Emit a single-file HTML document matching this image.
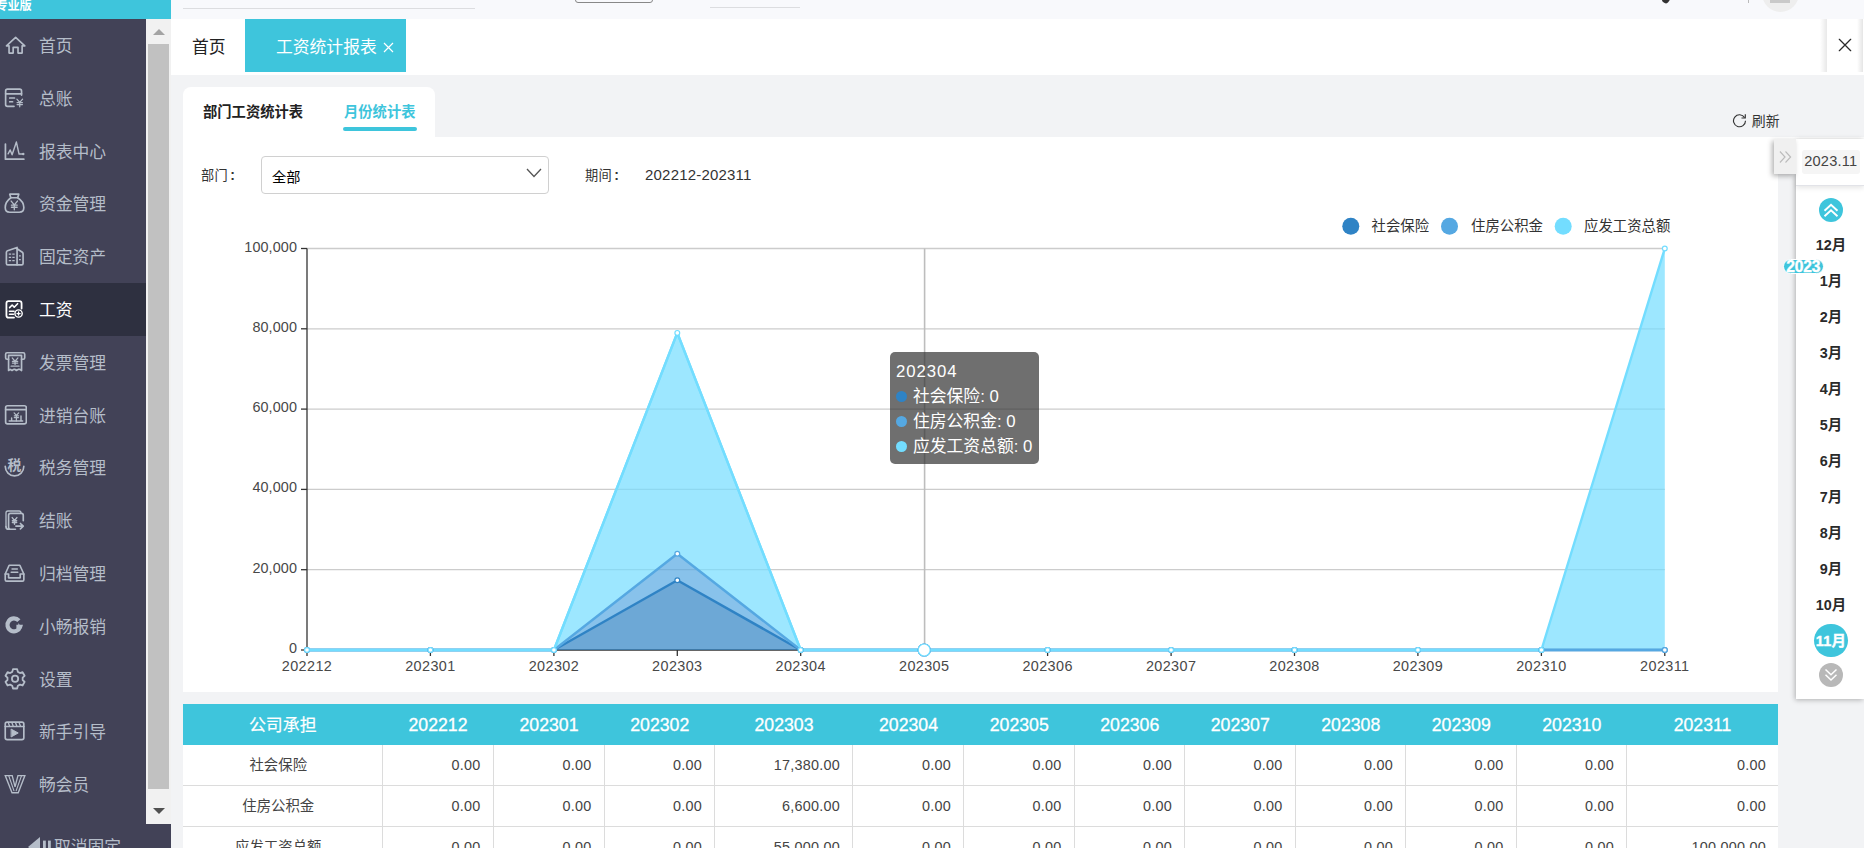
<!DOCTYPE html><html lang="zh-CN"><head><meta charset="utf-8"><title>工资统计报表</title><style>
*{box-sizing:border-box;margin:0;padding:0}
html,body{width:1864px;height:848px;overflow:hidden;background:#f2f3f5;font-family:"Liberation Sans","Noto Sans CJK SC",sans-serif;color:#333}
body{position:relative}
#topbar{position:absolute;left:0;top:0;width:1864px;height:19px;background:#f8f9fc;overflow:hidden}
#brand{position:absolute;left:0;top:0;width:171px;height:19px;background:#3ec5dc;overflow:hidden}
#brand span{position:absolute;left:-4.5px;top:-.5px;font-size:12.2px;line-height:12px;font-weight:bold;color:#fff;letter-spacing:-.2px;white-space:nowrap}
.tl{position:absolute;height:1px;background:#dcdde0}
.tbtn{position:absolute;left:575px;top:-10px;width:77.5px;height:13px;border:1px solid #888;border-radius:3px;background:transparent}
.pen{position:absolute;left:1662px;top:-3px;width:7px;height:6px;background:#333;border-radius:0 0 3px 3px;transform:rotate(35deg)}
.vsep{position:absolute;left:1748px;top:0;width:1px;height:3px;background:#bbb}
.avatar{position:absolute;left:1762px;top:-25px;width:37px;height:37px;border-radius:50%;background:#eee;overflow:hidden}
.avatar i{position:absolute;left:8px;top:20px;width:20px;height:8px;background:#c9c9c9}
#side{position:absolute;left:0;top:19px;width:146px;height:829px;background:#424257}
#side .it{position:absolute;left:0;width:146px;height:52.8px;color:#b5bdc9;font-size:16.8px;margin-top:-19px}
#side .it.act{background:#2e3040;color:#fff}
#side .it .ic{position:absolute;left:4px;top:14.5px}
#side .it span{position:absolute;left:39px;top:15px;line-height:25px;white-space:nowrap}
#sscroll{position:absolute;left:146px;top:19px;width:25px;height:805px;background:#f1f1f1}
#sscroll .thumb{position:absolute;left:2px;top:25px;width:21px;height:745px;background:#c1c1c1}
#sscroll .up{position:absolute;left:6.5px;top:10px;width:0;height:0;border:6px solid transparent;border-top:0;border-bottom:6px solid #a3a3a3}
#sscroll .dn{position:absolute;left:6.5px;top:789px;width:0;height:0;border:6px solid transparent;border-bottom:0;border-top:6px solid #505050}
#sfoot{position:absolute;left:0;top:824px;width:171px;height:24px;background:#424257;color:#b5bdc9;font-size:16.8px;overflow:hidden}
#sfoot span{position:absolute;left:54px;top:10.5px;line-height:25px;white-space:nowrap}
#tabbar{position:absolute;left:171px;top:19px;width:1693px;height:56px;background:#fff}
#tabbar .t1{position:absolute;left:21px;top:16px;font-size:16.8px;line-height:26px;color:#222}
#tabbar .t2{position:absolute;left:74px;top:0;width:161px;height:53px;background:#3ec5dc;color:#fff;font-size:16.8px}
#tabbar .t2 span{position:absolute;left:31px;top:16px;line-height:26px;white-space:nowrap}
#tabbar .closeb{position:absolute;left:1656px;top:0;width:36px;height:53px;background:#fff}
#tabbar .closeb:before{content:'';position:absolute;left:-7px;top:0;width:7px;height:53px;background:linear-gradient(to right,rgba(0,0,0,0),rgba(0,0,0,.09))}
#tabbar .closeb:after{content:'';position:absolute;left:29.5px;top:0;width:6.3px;height:53px;background:linear-gradient(to right,rgba(0,0,0,0),rgba(0,0,0,.10))}
#tabbar .closeb svg{position:absolute;left:11px;top:19px}
#subtabs{position:absolute;left:183px;top:87px;width:252px;height:50px;background:#fff;border-radius:8px 8px 0 0;font-size:14.3px;font-weight:bold}
#subtabs span{position:absolute;top:14px;line-height:22px;white-space:nowrap}
#subtabs .s1{left:20px;color:#222}
#subtabs .s2{left:161px;color:#3ec5dc}
#subtabs i{position:absolute;left:160px;top:40px;width:74px;height:4px;border-radius:2px;background:#3ec5dc}
#refresh{position:absolute;left:1732px;top:112px;font-size:13.9px;color:#333;white-space:nowrap}
#refresh svg{position:absolute;left:0;top:.7px}
#refresh span{position:absolute;left:19.8px;top:.2px;line-height:18px}
#panel{position:absolute;left:183px;top:137px;width:1595px;height:554.5px;background:#fff}
#panel .lab{position:absolute;letter-spacing:.4px;font-size:13.2px;line-height:20px;color:#333;white-space:nowrap}
#panel .sel{position:absolute;left:78px;top:19px;width:288px;height:38px;border:1px solid #d0d0d0;border-radius:4px;background:#fff}
#panel .lab b{font-weight:bold;margin-left:2px;font-size:14px}
#panel .sel span{position:absolute;left:10px;top:9.6px;font-size:14.2px;line-height:20px;color:#000}
#chart text.ay{font-size:14.4px;letter-spacing:.1px;fill:#484848;font-family:"Liberation Sans","Noto Sans CJK SC",sans-serif}
#chart text.ax{font-size:14.4px;letter-spacing:.4px;fill:#484848;font-family:"Liberation Sans","Noto Sans CJK SC",sans-serif}
#chart text.lg{font-size:14.4px;fill:#333;font-family:"Liberation Sans","Noto Sans CJK SC",sans-serif}
#tip{position:absolute;left:707px;top:215px;width:149px;height:112px;background:rgba(50,50,50,.7);border-radius:5px;color:#fff;font-size:16.8px;padding:6.5px 6px;white-space:nowrap}
#tip div{height:25.1px;line-height:25.1px}
#tip div:first-child{letter-spacing:.9px}
#tip i{display:inline-block;width:11px;height:11px;border-radius:50%;margin-right:6px;vertical-align:-0.5px}
#tbl{position:absolute;left:183px;top:704px;width:1595px;height:144px;background:#fff;overflow:hidden}
#tbl .thead{position:absolute;left:0;top:0;width:1595px;height:41px;background:#3ec5dc}
#tbl .th{position:absolute;top:0;height:41px;line-height:43.5px;color:#fff;font-size:17.7px;-webkit-text-stroke:.3px #fff;text-align:center;white-space:nowrap}
#tbl .th.c{-webkit-text-stroke:.2px #fff;font-size:16.9px;font-weight:400;line-height:43px}
#tbl .tr{position:absolute;left:0;width:1595px;height:41.3px;border-bottom:1.2px solid #dcdcdc}
#tbl .td{position:absolute;top:0;height:40.8px;line-height:40px;border-left:1.2px solid #dcdcdc;font-size:14.4px;color:#444;text-align:right;padding-right:12.2px;white-space:nowrap;letter-spacing:.25px}
#tbl .td:last-child{padding-right:11.2px}
#tbl .td.n{text-align:center;padding-right:9px;border-left:0;letter-spacing:0}
#rpstrip{position:absolute;left:1778px;top:137px;width:86px;height:2px;background:#fff}
#rp{position:absolute;left:1796px;top:139px;width:68px;height:559.5px;background:#fff;box-shadow:-1px 1px 5px rgba(0,0,0,.28)}
#rp .hd{position:absolute;left:0;top:0;width:68px;height:46.5px;background:#fff;border-bottom:1px solid #e2e3e8;box-shadow:0 2px 5px rgba(0,0,0,.10)}
#rp .tog{position:absolute;left:-22px;top:0;width:22px;height:35px;background:#f0f0f0;box-shadow:-2px 2px 5px rgba(0,0,0,.3)}
#rp .tog svg{position:absolute;left:5px;top:11px}
#rp .ym{position:absolute;left:6px;top:11px;width:58px;height:24px;background:#f5f5f5;border-radius:3px;font-size:14.6px;line-height:23px;letter-spacing:.2px;text-indent:-.5px;text-align:center;color:#444}
#rp .cup{position:absolute;left:23px;top:59px;width:24px;height:24px;border-radius:50%;background:#3ec5dc}
#rp .cdn{position:absolute;left:23px;top:524px;width:24px;height:24px;border-radius:50%;background:#b8b8b8}
#rp .m{position:absolute;left:0;width:70px;text-align:center;font-size:14.4px;font-weight:bold;line-height:22px;color:#2a2a2a}
#rp .mcur{position:absolute;left:18px;width:33.5px;height:33.5px;border-radius:50%;background:#3ec5dc}
#rp .yr{position:absolute;left:-13.5px;top:119.5px;width:41.5px;height:15px;border-radius:8px;background:#3ec5dc;border:1px solid #fff;color:#fff;font-size:15.6px;font-weight:bold;line-height:13.5px;text-align:center;letter-spacing:-0.2px;-webkit-text-stroke:.4px #fff;overflow:visible}

</style></head><body>
<div id="topbar"><div id="brand"><span>专业版</span></div>
<div class="tl" style="left:183px;top:8px;width:292px"></div>
<div class="tbtn"></div>
<div class="tl" style="left:710px;top:7px;width:90px"></div>
<div class="pen"></div><div class="vsep"></div><div class="avatar"><i></i></div>
</div>
<div id="side">
<div class="it" style="top:19.00px"><svg class="ic" viewBox="0 0 24 24" width="22.9" height="22.9" fill="none" stroke="#b5bdc9" stroke-width="1.75" stroke-linecap="round" stroke-linejoin="round"><path d="M12.2 3.6L21.8 12.4H19V20H14.7V14H9.6V20H5.3V12.4H2.6Z"/></svg><span>首页</span></div>
<div class="it" style="top:71.80px"><svg class="ic" viewBox="0 0 24 24" width="22.9" height="22.9" fill="none" stroke="#b5bdc9" stroke-width="1.75" stroke-linecap="round" stroke-linejoin="round"><path d="M18.4 9.5V5.200Q18.400 3.200 16.400 3.200H3.700Q1.700 3.200 1.700 5.200V19.400Q1.700 21.400 3.700 21.400H10.5"/><path d="M1.700 8.200H18.400M6 12.600H11M6 16.500H9"/><path d="M13.500 13.800l3 3.400l3-3.400M16.500 17.200v4.600M13.700 17.400h5.600M13.700 19.500h5.600" stroke-width="1.300"/></svg><span>总账</span></div>
<div class="it" style="top:124.60px"><svg class="ic" viewBox="0 0 24 24" width="22.9" height="22.9" fill="none" stroke="#b5bdc9" stroke-width="1.75" stroke-linecap="round" stroke-linejoin="round"><path d="M1.500 5.300V21.200H20.800" stroke-width="1.800"/><path d="M4.300 15.500L6.500 11.500L8.500 16.500L13 3.200L15.800 15.800H19.500" stroke-width="1.500"/><circle cx="20.200" cy="15.800" r="1.300" fill="#b5bdc9" stroke="none"/></svg><span>报表中心</span></div>
<div class="it" style="top:177.40px"><svg class="ic" viewBox="0 0 24 24" width="22.9" height="22.9" fill="none" stroke="#b5bdc9" stroke-width="1.75" stroke-linecap="round" stroke-linejoin="round"><path d="M6 2.300H15.500L14.300 6H7.200Z"/><path d="M7.200 6C3 9 1.300 12.500 1.300 16.300C1.300 19.500 3 21.200 6 21.200H16C19 21.200 20.800 19.500 20.800 16.300C20.800 12.500 19 9 14.300 6"/><path d="M7.500 9.500L10.800 13.500L14.100 9.500M10.800 13.500V18.600M7.800 13.800H13.800M7.800 16H13.800" stroke-width="1.400"/></svg><span>资金管理</span></div>
<div class="it" style="top:230.20px"><svg class="ic" viewBox="0 0 24 24" width="22.9" height="22.9" fill="none" stroke="#b5bdc9" stroke-width="1.75" stroke-linecap="round" stroke-linejoin="round"><path d="M13.700 2.600V20.800H4Q2.500 20.800 2.500 19.300V7.800Q2.500 6.600 3.700 6.100Z"/><path d="M13.700 4L19.200 7.600Q20 8.200 20 9.200V19.300Q20 20.800 18.500 20.800H13.700"/><path d="M5 9.500H7.500M8.700 9.500H11.200M5 13H7.500M8.700 13H11.200M5 16.500H7.500M8.700 16.500H11.200M15.700 11.300H17.600M15.700 15.300H17.600" stroke-width="1.300" stroke-linecap="butt"/></svg><span>固定资产</span></div>
<div class="it act" style="top:283.00px"><svg class="ic" viewBox="0 0 24 24" width="22.9" height="22.9" fill="none" stroke="#ffffff" stroke-width="1.75" stroke-linecap="round" stroke-linejoin="round"><g transform="translate(11 12) scale(.93) translate(-11 -12)"><path d="M19 11V5.200Q19 2.700 16.500 2.700H4.400Q1.900 2.700 1.900 5.200V18.700Q1.900 21.200 4.400 21.200H10.500" stroke-width="2"/><path d="M5.500 10L8.400 7L10.700 9.500L14.500 5.500" stroke-width="1.800"/><path d="M5.400 14H10.500M5.400 17.500H9.800" stroke-width="1.800"/><circle cx="15.600" cy="16.600" r="4.100" stroke-width="1.600"/><path d="M15.600 14.800V18.400M13.800 16.600H17.400" stroke-width="1.400"/></g></svg><span>工资</span></div>
<div class="it" style="top:335.80px"><svg class="ic" viewBox="0 0 24 24" width="22.9" height="22.9" fill="none" stroke="#b5bdc9" stroke-width="1.75" stroke-linecap="round" stroke-linejoin="round"><path d="M4.800 9.700H3.200Q1.700 9.700 1.700 8.200V4.400Q1.700 2.900 3.200 2.900H20.200Q21.700 2.900 21.700 4.400V8.200Q21.700 9.700 20.200 9.700H18.400"/><path d="M4.800 5.700V21.500L6.500 20.300L8.400 21.500L10.200 20.300H11.600L13 21.500L14.900 20.300H16.700L18.400 21.500V5.700H4.800"/><path d="M8.600 8.300L11.600 11.800L14.600 8.300M11.600 11.800V15.200M8.800 11.900H14.400M8.800 13.700H14.400M7.400 17H15.800" stroke-width="1.300"/></svg><span>发票管理</span></div>
<div class="it" style="top:388.60px"><svg class="ic" viewBox="0 0 24 24" width="22.9" height="22.9" fill="none" stroke="#b5bdc9" stroke-width="1.75" stroke-linecap="round" stroke-linejoin="round"><rect x="1.700" y="2.900" width="21.700" height="18.900" rx="2"/><path d="M1.700 7H23.400"/><path d="M5.400 18.800H19.600M8 18.800V15.600M17.800 18.800V13.500" stroke-width="1.500"/><path d="M10.600 10.400L13 13L15.400 10.400M13 13V18.800M10.800 13.400H15.200M10.800 15.300H15.200" stroke-width="1.300"/></svg><span>进销台账</span></div>
<div class="it" style="top:441.40px"><svg class="ic" viewBox="0 0 24 24" width="22.9" height="22.9" fill="none" stroke="#b5bdc9" stroke-width="1.75" stroke-linecap="round" stroke-linejoin="round"><path d="M1.300 10.800A9.750 10 0 0 0 20.800 10.800"/><text x="11" y="14.300" text-anchor="middle" font-size="14.500" font-weight="bold" fill="#b5bdc9" stroke="none" font-family="Liberation Sans,Noto Sans CJK SC,sans-serif">税</text></svg><span>税务管理</span></div>
<div class="it" style="top:494.20px"><svg class="ic" viewBox="0 0 24 24" width="22.9" height="22.9" fill="none" stroke="#b5bdc9" stroke-width="1.75" stroke-linecap="round" stroke-linejoin="round"><path d="M2.100 18.500V4.100Q2.100 2.100 4.100 2.100H15.800Q17.800 2.100 17.800 4.100" stroke-width="1.400"/><path d="M20.200 12.300V6.600Q20.200 4.600 18.200 4.600H6.800Q4.800 4.600 4.800 6.600V19.200Q4.800 21.200 6.800 21.200H12M2.100 18.500Q2.100 21.200 4.800 21.200H6.800"/><path d="M8.600 9L11 12L13.500 9M11 12V16M8.800 12.400H13.300M8.800 14.100H13.300" stroke-width="1.500"/><path d="M12.500 18H20M17.200 15.200L20.200 18L17.200 20.800"/></svg><span>结账</span></div>
<div class="it" style="top:547.00px"><svg class="ic" viewBox="0 0 24 24" width="22.9" height="22.9" fill="none" stroke="#b5bdc9" stroke-width="1.75" stroke-linecap="round" stroke-linejoin="round"><path d="M1.300 12.600L5.400 3.400H16.600L20.800 12.600V18.500Q20.800 20 19.300 20H2.800Q1.300 20 1.300 18.500Z"/><path d="M1.300 12.600H4.800V16.600H17V12.600H20.800"/><path d="M8.400 7.300H14M7.500 10.800H14.500" stroke-width="1.500"/></svg><span>归档管理</span></div>
<div class="it" style="top:599.80px"><svg class="ic" viewBox="0 0 24 24" width="22.9" height="22.9" fill="none" stroke="#b5bdc9" stroke-width="1.75" stroke-linecap="round" stroke-linejoin="round"><path d="M15.600 7A6.800 6.800 0 1 0 16.900 13.500H13" stroke-width="4.400" stroke-linecap="butt" stroke-linejoin="miter"/><path d="M15 9.500L19 15H15Z" fill="#b5bdc9" stroke="none"/></svg><span>小畅报销</span></div>
<div class="it" style="top:652.60px"><svg class="ic" viewBox="0 0 24 24" width="22.9" height="22.9" fill="none" stroke="#b5bdc9" stroke-width="1.75" stroke-linecap="round" stroke-linejoin="round"><g transform="translate(11.600 12.300) scale(1.090) translate(-12 -12)"><circle cx="12" cy="12" r="3"/><path d="M10 2.800h4l.7 2.600l2 1.100l2.500-.8l2 3.500l-1.900 1.800v2.200l1.900 1.800l-2 3.500l-2.500-.8l-2 1.100l-.7 2.600h-4l-.7-2.600l-2-1.100l-2.500.8l-2-3.500l1.900-1.800v-2.200L2.800 9.200l2-3.500l2.500.8l2-1.100z"/></g></svg><span>设置</span></div>
<div class="it" style="top:705.40px"><svg class="ic" viewBox="0 0 24 24" width="22.9" height="22.9" fill="none" stroke="#b5bdc9" stroke-width="1.75" stroke-linecap="round" stroke-linejoin="round"><rect x="1.300" y="2.300" width="19.500" height="18.300" rx="2"/><path d="M1.300 6.800H20.800"/><path d="M4.500 2.800l1.400 3.700M8.300 2.800l1.400 3.700M12.100 2.800l1.400 3.700M15.900 2.800l1.400 3.700" stroke-width="1.400"/><path d="M7.800 9.700L14.900 13.600L7.800 17.600Z" fill="#b5bdc9" stroke-width="1"/></svg><span>新手引导</span></div>
<div class="it" style="top:758.20px"><svg class="ic" viewBox="0 0 24 24" width="22.9" height="22.9" fill="none" stroke="#b5bdc9" stroke-width="1.75" stroke-linecap="round" stroke-linejoin="round"><path d="M1.300 2.700H8.600L11.600 14.500L14.600 2.700H21.900L14.900 20.700H8.400Z" stroke-width="1.400" stroke-linejoin="miter"/><path d="M5 3L10.400 18.500M18.300 3L12.800 18.500" stroke-width="1.200"/></svg><span>畅会员</span></div>
</div>
<div id="sscroll"><div class="up"></div><div class="thumb"></div><div class="dn"></div></div>
<div id="sfoot"><svg width="26" height="20" viewBox="0 0 26 20" style="position:absolute;left:28px;top:13px"><path d="M12 0 L12 20 L0 10 Z" fill="#b5bdc9"/><rect x="15" y="3.6" width="2.800" height="14" fill="#b5bdc9"/><rect x="20" y="3.600" width="2.800" height="14" fill="#b5bdc9"/></svg><span>取消固定</span></div>
<div id="tabbar"><div class="t1">首页</div><div class="t2"><span>工资统计报表</span><svg width="11" height="11" viewBox="0 0 11 11" style="position:absolute;left:138px;top:23.3px"><path d="M1 1L10 10M10 1L1 10" stroke="#fff" stroke-width="1.2"/></svg></div>
<div class="closeb"><svg width="14" height="14" viewBox="0 0 14 14"><path d="M1.300 1.300L12.700 12.700M12.700 1.300L1.300 12.700" stroke="#2a2a2a" stroke-width="1.250" stroke-linecap="round"/></svg></div></div>
<div id="subtabs"><span class="s1">部门工资统计表</span><span class="s2">月份统计表</span><i></i></div>
<div id="refresh"><svg width="15" height="15" viewBox="0 0 15 15" fill="none" stroke="#333" stroke-width="1.15"><path d="M12.6 4.6A6 6 0 1 0 13.5 7.7"/><path d="M13.3 1.2V5H9.5" stroke-linejoin="miter"/></svg><span>刷新</span></div>
<div id="panel">
<span class="lab" style="left:18px;top:27.8px">部门<b>:</b></span>
<div class="sel"><span>全部</span><svg width="16" height="10" viewBox="0 0 16 10" style="position:absolute;left:263.5px;top:11px"><path d="M1 1L8 8.5L15 1" fill="none" stroke="#555" stroke-width="1.3"/></svg></div>
<span class="lab" style="left:402px;top:27.8px">期间<b>:</b></span>
<span class="lab" style="left:462px;top:27.6px;font-size:15px;color:#333;letter-spacing:.2px">202212-202311</span>
<svg id="chart" width="1595" height="553" viewBox="183 137 1595 553" style="position:absolute;left:0;top:0"><line x1="301.0" x2="307.0" y1="650.00" y2="650.00" stroke="#333" stroke-width="1.3"/><text x="297.0" y="653.00" text-anchor="end" class="ay">0</text><line x1="307.0" x2="1664.8" y1="569.70" y2="569.70" stroke="#cccccc" stroke-width="1.3"/><line x1="301.0" x2="307.0" y1="569.70" y2="569.70" stroke="#333" stroke-width="1.3"/><text x="297.0" y="572.70" text-anchor="end" class="ay">20,000</text><line x1="307.0" x2="1664.8" y1="489.40" y2="489.40" stroke="#cccccc" stroke-width="1.3"/><line x1="301.0" x2="307.0" y1="489.40" y2="489.40" stroke="#333" stroke-width="1.3"/><text x="297.0" y="492.40" text-anchor="end" class="ay">40,000</text><line x1="307.0" x2="1664.8" y1="409.10" y2="409.10" stroke="#cccccc" stroke-width="1.3"/><line x1="301.0" x2="307.0" y1="409.10" y2="409.10" stroke="#333" stroke-width="1.3"/><text x="297.0" y="412.10" text-anchor="end" class="ay">60,000</text><line x1="307.0" x2="1664.8" y1="328.80" y2="328.80" stroke="#cccccc" stroke-width="1.3"/><line x1="301.0" x2="307.0" y1="328.80" y2="328.80" stroke="#333" stroke-width="1.3"/><text x="297.0" y="331.80" text-anchor="end" class="ay">80,000</text><line x1="307.0" x2="1664.8" y1="248.50" y2="248.50" stroke="#cccccc" stroke-width="1.3"/><line x1="301.0" x2="307.0" y1="248.50" y2="248.50" stroke="#333" stroke-width="1.3"/><text x="297.0" y="251.50" text-anchor="end" class="ay">100,000</text><line x1="307.0" x2="1664.8" y1="650.00" y2="650.00" stroke="#333" stroke-width="1.3"/><line x1="307.0" x2="307.0" y1="248.50" y2="650.00" stroke="#333" stroke-width="1.3"/><line x1="307.0" x2="307.0" y1="650.00" y2="656.00" stroke="#333" stroke-width="1.3"/><text x="307.0" y="671.00" text-anchor="middle" class="ax">202212</text><line x1="430.4" x2="430.4" y1="650.00" y2="656.00" stroke="#333" stroke-width="1.3"/><text x="430.4" y="671.00" text-anchor="middle" class="ax">202301</text><line x1="553.9" x2="553.9" y1="650.00" y2="656.00" stroke="#333" stroke-width="1.3"/><text x="553.9" y="671.00" text-anchor="middle" class="ax">202302</text><line x1="677.3" x2="677.3" y1="650.00" y2="656.00" stroke="#333" stroke-width="1.3"/><text x="677.3" y="671.00" text-anchor="middle" class="ax">202303</text><line x1="800.7" x2="800.7" y1="650.00" y2="656.00" stroke="#333" stroke-width="1.3"/><text x="800.7" y="671.00" text-anchor="middle" class="ax">202304</text><line x1="924.2" x2="924.2" y1="650.00" y2="656.00" stroke="#333" stroke-width="1.3"/><text x="924.2" y="671.00" text-anchor="middle" class="ax">202305</text><line x1="1047.6" x2="1047.6" y1="650.00" y2="656.00" stroke="#333" stroke-width="1.3"/><text x="1047.6" y="671.00" text-anchor="middle" class="ax">202306</text><line x1="1171.1" x2="1171.1" y1="650.00" y2="656.00" stroke="#333" stroke-width="1.3"/><text x="1171.1" y="671.00" text-anchor="middle" class="ax">202307</text><line x1="1294.5" x2="1294.5" y1="650.00" y2="656.00" stroke="#333" stroke-width="1.3"/><text x="1294.5" y="671.00" text-anchor="middle" class="ax">202308</text><line x1="1417.9" x2="1417.9" y1="650.00" y2="656.00" stroke="#333" stroke-width="1.3"/><text x="1417.9" y="671.00" text-anchor="middle" class="ax">202309</text><line x1="1541.4" x2="1541.4" y1="650.00" y2="656.00" stroke="#333" stroke-width="1.3"/><text x="1541.4" y="671.00" text-anchor="middle" class="ax">202310</text><line x1="1664.8" x2="1664.8" y1="650.00" y2="656.00" stroke="#333" stroke-width="1.3"/><text x="1664.8" y="671.00" text-anchor="middle" class="ax">202311</text><polygon points="307.0,650.00 430.4,650.00 553.9,650.00 677.3,580.22 800.7,650.00 924.2,650.00 1047.6,650.00 1171.1,650.00 1294.5,650.00 1417.9,650.00 1541.4,650.00 1664.8,650.00 1664.8,650.00 1541.4,650.00 1417.9,650.00 1294.5,650.00 1171.1,650.00 1047.6,650.00 924.2,650.00 800.7,650.00 677.3,650.00 553.9,650.00 430.4,650.00 307.0,650.00" fill="#2f83c5" fill-opacity="0.7"/><polygon points="307.0,650.00 430.4,650.00 553.9,650.00 677.3,553.72 800.7,650.00 924.2,650.00 1047.6,650.00 1171.1,650.00 1294.5,650.00 1417.9,650.00 1541.4,650.00 1664.8,650.00 1664.8,650.00 1541.4,650.00 1417.9,650.00 1294.5,650.00 1171.1,650.00 1047.6,650.00 924.2,650.00 800.7,650.00 677.3,580.22 553.9,650.00 430.4,650.00 307.0,650.00" fill="#55a8e2" fill-opacity="0.7"/><polygon points="307.0,650.00 430.4,650.00 553.9,650.00 677.3,332.90 800.7,650.00 924.2,650.00 1047.6,650.00 1171.1,650.00 1294.5,650.00 1417.9,650.00 1541.4,650.00 1664.8,248.50 1664.8,650.00 1541.4,650.00 1417.9,650.00 1294.5,650.00 1171.1,650.00 1047.6,650.00 924.2,650.00 800.7,650.00 677.3,553.72 553.9,650.00 430.4,650.00 307.0,650.00" fill="#73ddff" fill-opacity="0.7"/><polyline points="307.0,650.00 430.4,650.00 553.9,650.00 677.3,332.90 800.7,650.00 924.2,650.00 1047.6,650.00 1171.1,650.00 1294.5,650.00 1417.9,650.00 1541.4,650.00 1664.8,248.50" fill="none" stroke="#73ddff" stroke-width="2.4" stroke-linejoin="bevel"/><polyline points="307.0,650.00 430.4,650.00 553.9,650.00 677.3,580.22 800.7,650.00 924.2,650.00 1047.6,650.00 1171.1,650.00 1294.5,650.00 1417.9,650.00 1541.4,650.00 1664.8,650.00" fill="none" stroke="#2f83c5" stroke-width="2.4" stroke-linejoin="bevel"/><polyline points="307.0,650.00 430.4,650.00 553.9,650.00 677.3,553.72 800.7,650.00 924.2,650.00 1047.6,650.00 1171.1,650.00 1294.5,650.00 1417.9,650.00 1541.4,650.00 1664.8,650.00" fill="none" stroke="#55a8e2" stroke-width="2.4" stroke-linejoin="bevel"/><polyline points="307.0,650.00 430.4,650.00 553.9,650.00 677.3,332.90 800.7,650.00 924.2,650.00 1047.6,650.00 1171.1,650.00 1294.5,650.00 1417.9,650.00 1541.4,650.00" fill="none" stroke="#73ddff" stroke-width="2.4" stroke-linejoin="bevel"/><line x1="924.6" x2="924.6" y1="248.50" y2="650.00" stroke="#bdbdbd" stroke-width="1.6"/><circle cx="307.0" cy="650.00" r="2.4" fill="#fff" stroke="#2f83c5" stroke-width="1.2"/><circle cx="430.4" cy="650.00" r="2.4" fill="#fff" stroke="#2f83c5" stroke-width="1.2"/><circle cx="553.9" cy="650.00" r="2.4" fill="#fff" stroke="#2f83c5" stroke-width="1.2"/><circle cx="677.3" cy="580.22" r="2.4" fill="#fff" stroke="#2f83c5" stroke-width="1.2"/><circle cx="800.7" cy="650.00" r="2.4" fill="#fff" stroke="#2f83c5" stroke-width="1.2"/><circle cx="924.2" cy="650.00" r="6.0" fill="#fff" stroke="#2f83c5" stroke-width="1.2"/><circle cx="1047.6" cy="650.00" r="2.4" fill="#fff" stroke="#2f83c5" stroke-width="1.2"/><circle cx="1171.1" cy="650.00" r="2.4" fill="#fff" stroke="#2f83c5" stroke-width="1.2"/><circle cx="1294.5" cy="650.00" r="2.4" fill="#fff" stroke="#2f83c5" stroke-width="1.2"/><circle cx="1417.9" cy="650.00" r="2.4" fill="#fff" stroke="#2f83c5" stroke-width="1.2"/><circle cx="1541.4" cy="650.00" r="2.4" fill="#fff" stroke="#2f83c5" stroke-width="1.2"/><circle cx="1664.8" cy="650.00" r="2.4" fill="#fff" stroke="#2f83c5" stroke-width="1.2"/><circle cx="307.0" cy="650.00" r="2.4" fill="#fff" stroke="#55a8e2" stroke-width="1.2"/><circle cx="430.4" cy="650.00" r="2.4" fill="#fff" stroke="#55a8e2" stroke-width="1.2"/><circle cx="553.9" cy="650.00" r="2.4" fill="#fff" stroke="#55a8e2" stroke-width="1.2"/><circle cx="677.3" cy="553.72" r="2.4" fill="#fff" stroke="#55a8e2" stroke-width="1.2"/><circle cx="800.7" cy="650.00" r="2.4" fill="#fff" stroke="#55a8e2" stroke-width="1.2"/><circle cx="924.2" cy="650.00" r="6.0" fill="#fff" stroke="#55a8e2" stroke-width="1.2"/><circle cx="1047.6" cy="650.00" r="2.4" fill="#fff" stroke="#55a8e2" stroke-width="1.2"/><circle cx="1171.1" cy="650.00" r="2.4" fill="#fff" stroke="#55a8e2" stroke-width="1.2"/><circle cx="1294.5" cy="650.00" r="2.4" fill="#fff" stroke="#55a8e2" stroke-width="1.2"/><circle cx="1417.9" cy="650.00" r="2.4" fill="#fff" stroke="#55a8e2" stroke-width="1.2"/><circle cx="1541.4" cy="650.00" r="2.4" fill="#fff" stroke="#55a8e2" stroke-width="1.2"/><circle cx="1664.8" cy="650.00" r="2.4" fill="#fff" stroke="#55a8e2" stroke-width="1.2"/><circle cx="307.0" cy="650.00" r="2.4" fill="#fff" stroke="#73ddff" stroke-width="1.2"/><circle cx="430.4" cy="650.00" r="2.4" fill="#fff" stroke="#73ddff" stroke-width="1.2"/><circle cx="553.9" cy="650.00" r="2.4" fill="#fff" stroke="#73ddff" stroke-width="1.2"/><circle cx="677.3" cy="332.90" r="2.4" fill="#fff" stroke="#73ddff" stroke-width="1.2"/><circle cx="800.7" cy="650.00" r="2.4" fill="#fff" stroke="#73ddff" stroke-width="1.2"/><circle cx="924.2" cy="650.00" r="6.0" fill="#fff" stroke="#73ddff" stroke-width="1.2"/><circle cx="1047.6" cy="650.00" r="2.4" fill="#fff" stroke="#73ddff" stroke-width="1.2"/><circle cx="1171.1" cy="650.00" r="2.4" fill="#fff" stroke="#73ddff" stroke-width="1.2"/><circle cx="1294.5" cy="650.00" r="2.4" fill="#fff" stroke="#73ddff" stroke-width="1.2"/><circle cx="1417.9" cy="650.00" r="2.4" fill="#fff" stroke="#73ddff" stroke-width="1.2"/><circle cx="1541.4" cy="650.00" r="2.4" fill="#fff" stroke="#73ddff" stroke-width="1.2"/><circle cx="1664.8" cy="248.50" r="2.4" fill="#fff" stroke="#73ddff" stroke-width="1.2"/><circle cx="1350.8" cy="226.3" r="8.5" fill="#2f83c5"/><text x="1371.5" y="231.3" class="lg">社会保险</text><circle cx="1449.5" cy="226.3" r="8.5" fill="#55a8e2"/><text x="1471.0" y="231.3" class="lg">住房公积金</text><circle cx="1563.2" cy="226.3" r="8.5" fill="#73ddff"/><text x="1584.0" y="231.3" class="lg">应发工资总额</text></svg>
<div id="tip"><div>202304</div><div><i style="background:#2f83c5"></i>社会保险: 0</div><div><i style="background:#55a8e2"></i>住房公积金: 0</div><div><i style="background:#73ddff"></i>应发工资总额: 0</div></div>
</div>
<div id="tbl"><div class="thead">
<div class="th c" style="left:0.0px;width:199.5px">公司承担</div>
<div class="th" style="left:199.5px;width:111.0px">202212</div>
<div class="th" style="left:310.5px;width:111.0px">202301</div>
<div class="th" style="left:421.5px;width:110.5px">202302</div>
<div class="th" style="left:532.0px;width:138.0px">202303</div>
<div class="th" style="left:670.0px;width:111.0px">202304</div>
<div class="th" style="left:781.0px;width:110.5px">202305</div>
<div class="th" style="left:891.5px;width:110.5px">202306</div>
<div class="th" style="left:1002.0px;width:110.5px">202307</div>
<div class="th" style="left:1112.5px;width:110.5px">202308</div>
<div class="th" style="left:1223.0px;width:110.5px">202309</div>
<div class="th" style="left:1333.5px;width:110.5px">202310</div>
<div class="th" style="left:1444.0px;width:151.0px">202311</div>
</div>
<div class="tr" style="top:41.0px">
<div class="td n" style="left:0;width:199.5px">社会保险</div>
<div class="td" style="left:198.8px;width:111.0px">0.00</div>
<div class="td" style="left:309.8px;width:111.0px">0.00</div>
<div class="td" style="left:420.8px;width:110.5px">0.00</div>
<div class="td" style="left:531.3px;width:138.0px">17,380.00</div>
<div class="td" style="left:669.3px;width:111.0px">0.00</div>
<div class="td" style="left:780.3px;width:110.5px">0.00</div>
<div class="td" style="left:890.8px;width:110.5px">0.00</div>
<div class="td" style="left:1001.3px;width:110.5px">0.00</div>
<div class="td" style="left:1111.8px;width:110.5px">0.00</div>
<div class="td" style="left:1222.3px;width:110.5px">0.00</div>
<div class="td" style="left:1332.8px;width:110.5px">0.00</div>
<div class="td" style="left:1443.3px;width:151.0px">0.00</div>
</div>
<div class="tr" style="top:82.0px">
<div class="td n" style="left:0;width:199.5px">住房公积金</div>
<div class="td" style="left:198.8px;width:111.0px">0.00</div>
<div class="td" style="left:309.8px;width:111.0px">0.00</div>
<div class="td" style="left:420.8px;width:110.5px">0.00</div>
<div class="td" style="left:531.3px;width:138.0px">6,600.00</div>
<div class="td" style="left:669.3px;width:111.0px">0.00</div>
<div class="td" style="left:780.3px;width:110.5px">0.00</div>
<div class="td" style="left:890.8px;width:110.5px">0.00</div>
<div class="td" style="left:1001.3px;width:110.5px">0.00</div>
<div class="td" style="left:1111.8px;width:110.5px">0.00</div>
<div class="td" style="left:1222.3px;width:110.5px">0.00</div>
<div class="td" style="left:1332.8px;width:110.5px">0.00</div>
<div class="td" style="left:1443.3px;width:151.0px">0.00</div>
</div>
<div class="tr" style="top:123.0px">
<div class="td n" style="left:0;width:199.5px">应发工资总额</div>
<div class="td" style="left:198.8px;width:111.0px">0.00</div>
<div class="td" style="left:309.8px;width:111.0px">0.00</div>
<div class="td" style="left:420.8px;width:110.5px">0.00</div>
<div class="td" style="left:531.3px;width:138.0px">55,000.00</div>
<div class="td" style="left:669.3px;width:111.0px">0.00</div>
<div class="td" style="left:780.3px;width:110.5px">0.00</div>
<div class="td" style="left:890.8px;width:110.5px">0.00</div>
<div class="td" style="left:1001.3px;width:110.5px">0.00</div>
<div class="td" style="left:1111.8px;width:110.5px">0.00</div>
<div class="td" style="left:1222.3px;width:110.5px">0.00</div>
<div class="td" style="left:1332.8px;width:110.5px">0.00</div>
<div class="td" style="left:1443.3px;width:151.0px">100,000.00</div>
</div>
</div>
<div id="rpstrip"></div>
<div id="rp"><div class="hd"></div>
<div class="tog"><svg width="13" height="14" viewBox="0 0 14 14" preserveAspectRatio="none" fill="none" stroke="#bbb" stroke-width="1.2"><path d="M1 1.5L6.5 7L1 12.5M7 1.5L12.5 7L7 12.5"/></svg></div>
<div class="ym">2023.11</div>
<div class="cup"><svg width="24" height="24" viewBox="0 0 24 24" fill="none" stroke="#fff" stroke-width="1.9"><path d="M5.500 12.700L12 6.700L18.500 12.700M5.500 18.200L12 12.200L18.500 18.200"/></svg></div>
<div class="m" style="top:95.4px">12月</div>
<div class="m" style="top:131.4px">1月</div>
<div class="m" style="top:167.4px">2月</div>
<div class="m" style="top:203.4px">3月</div>
<div class="m" style="top:239.4px">4月</div>
<div class="m" style="top:275.4px">5月</div>
<div class="m" style="top:311.4px">6月</div>
<div class="m" style="top:347.4px">7月</div>
<div class="m" style="top:383.4px">8月</div>
<div class="m" style="top:419.4px">9月</div>
<div class="m" style="top:455.4px">10月</div>
<div class="mcur" style="top:484.5px"></div>
<div class="m" style="top:491.4px;color:#fff;-webkit-text-stroke:.4px #fff;letter-spacing:.3px">11月</div>
<div class="yr">2023</div>
<div class="cdn"><svg width="24" height="24" viewBox="0 0 24 24" fill="none" stroke="#fff" stroke-width="1.5"><path d="M6.500 6.500L12 11.800L17.500 6.500M6.500 11.700L12 17L17.500 11.700"/></svg></div>
</div>
</body></html>
